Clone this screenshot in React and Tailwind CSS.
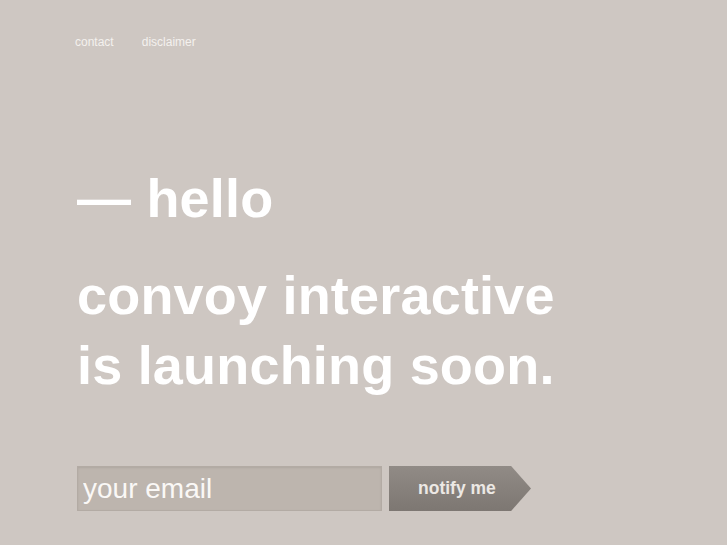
import React from 'react';

const App = () => {
  return (
    <div className="w-[727px] h-[545px] bg-[#cec7c2] overflow-hidden" style={{ fontFamily: '"Liberation Sans", Arial, sans-serif' }}>
      {/* top nav */}
      <nav className="flex gap-[28px] pl-[75px] pt-[33px] text-[12px] text-[#f4f1ee]">
        <a href="#">contact</a>
        <a href="#">disclaimer</a>
      </nav>

      <div className="pl-[77px] pt-[117px] text-white font-bold">
        <h1 className="text-[54px] leading-[60px] tracking-[0.2px]">— hello</h1>
        <h2 className="mt-[32px] text-[54px] leading-[70px] tracking-[0.2px]">
          convoy interactive
          <br />
          is launching soon.
        </h2>
      </div>

      <form className="flex items-center pl-[77px] mt-[66px]" onSubmit={(e) => e.preventDefault()}>
        <input
          type="text"
          placeholder="your email"
          className="w-[305px] h-[45px] px-[5px] bg-[#bdb5ae] border border-[#b3aba4] text-[28px] text-white placeholder:text-[#faf8f6] outline-none shadow-[inset_0_1px_2px_rgba(0,0,0,0.08)]"
        />
        <button
          type="submit"
          className="ml-[7px] w-[142px] h-[45px] flex items-center pl-[29px] text-[17.5px] font-bold text-[#ece8e4] bg-gradient-to-b from-[#918b86] to-[#7d7772]"
          style={{ clipPath: 'polygon(0 0, 86% 0, 100% 50%, 86% 100%, 0 100%)' }}
        >
          notify me
        </button>
      </form>
    </div>
  );
};

export default App;
